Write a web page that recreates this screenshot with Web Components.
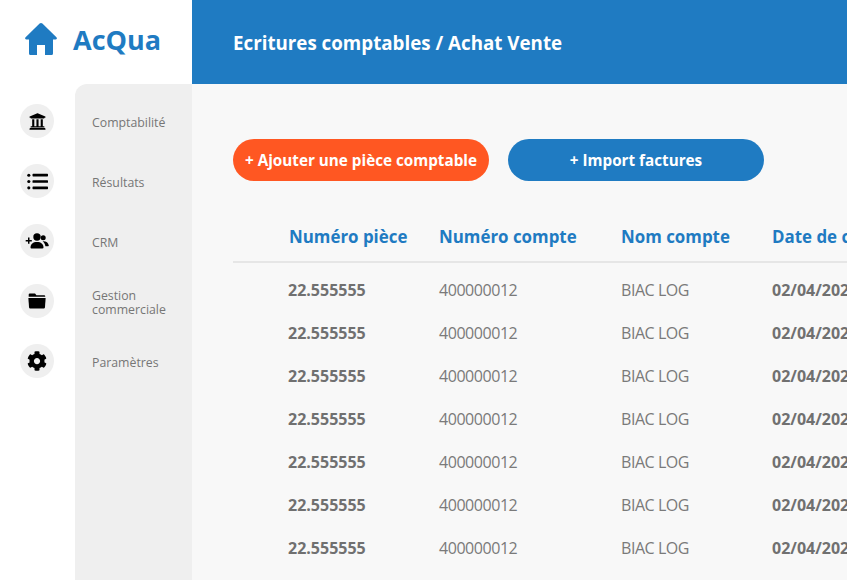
<!DOCTYPE html>
<html lang="fr">
<head>
<meta charset="utf-8">
<title>AcQua</title>
<style>
    html, body { margin: 0; height: 100%; overflow: hidden; }
    body { font-family: "Open Sans", "Liberation Sans", sans-serif; }
</style>
</head>
<body>
<app-shell>
    <app-brand slot="brand" label="AcQua"></app-brand>
    <app-header slot="header" label="Ecritures comptables / Achat Vente"></app-header>
    <side-nav slot="nav">
        <side-item icon="bank" label="Comptabilité"></side-item>
        <side-item icon="list" label="Résultats"></side-item>
        <side-item icon="users" label="CRM"></side-item>
        <side-item icon="folder" label="Gestion commerciale"></side-item>
        <side-item icon="cog" label="Paramètres"></side-item>
    </side-nav>
    <div slot="actions" style="display:flex;gap:19px">
        <pill-button color="#ff5722">+ Ajouter une pièce comptable</pill-button>
        <pill-button color="#1f7bc2">+ Import factures</pill-button>
    </div>
    <entry-table slot="table"></entry-table>
</app-shell>

<script>
(function(){
    const ICONS = {
        bank: '<svg viewBox="0 0 512 512" width="17" height="19" preserveAspectRatio="none"><path d="M496 128v16a8 8 0 0 1-8 8h-24v12c0 6.6-5.4 12-12 12H60c-6.6 0-12-5.4-12-12v-12H24a8 8 0 0 1-8-8v-16a8 8 0 0 1 4.9-7.4l232-88a8 8 0 0 1 6.2 0l232 88A8 8 0 0 1 496 128zm-24 304H40c-13.3 0-24 10.7-24 24v16a8 8 0 0 0 8 8h464a8 8 0 0 0 8-8v-16c0-13.3-10.7-24-24-24zM96 192v192H60c-6.6 0-12 5.4-12 12v20h416v-20c0-6.6-5.4-12-12-12h-36V192h-64v192h-64V192h-64v192h-64V192H96z"/></svg>',
        list: '<svg viewBox="0 0 512 512" width="21" height="21"><circle cx="44" cy="102" r="38"/><circle cx="44" cy="256" r="38"/><circle cx="44" cy="410" r="38"/><path d="M150 70h346a16 16 0 0 1 16 16v32a16 16 0 0 1-16 16H150a16 16 0 0 1-16-16V86a16 16 0 0 1 16-16zm0 154h346a16 16 0 0 1 16 16v32a16 16 0 0 1-16 16H150a16 16 0 0 1-16-16v-32a16 16 0 0 1 16-16zm0 154h346a16 16 0 0 1 16 16v32a16 16 0 0 1-16 16H150a16 16 0 0 1-16-16v-32a16 16 0 0 1 16-16z"/></svg>',
        users: '<svg viewBox="0 0 24 18" width="24" height="18"><circle cx="12" cy="5" r="3.7"/><path d="M5.5 15.5c0-3.6 2.6-5.6 6.5-5.6s6.5 2 6.5 5.6c0 .5-.4.9-.9.9H6.4c-.5 0-.9-.4-.9-.9z"/><circle cx="18.2" cy="5.8" r="2.5"/><path d="M17.6 9.2c3.2-.3 5.8 1.3 6.2 4.2.1.5-.2.8-.7.8h-2.7c-.3-2-1.2-3.8-2.8-5z"/><path d="M3 5.6h1.500v2.300h2.300v1.500H4.500v2.300H3V9.400H.7V7.900H3z"/></svg>',
        folder: '<svg viewBox="0 0 512 512" width="18" height="18"><path d="M50 40h150l40 50h220c20 0 30 10 30 30v15H20v-65c0-20 10-30 30-30z"/><path d="M10 170h492l-20 270c-2 20-15 30-30 30H60c-15 0-28-10-30-30z"/></svg>',
        cog: '<svg viewBox="0 0 512 512" width="20" height="20"><path d="M487.400 315.700l-42.600-24.600c4.300-23.200 4.300-47 0-70.200l42.600-24.600c4.900-2.800 7.100-8.600 5.500-14-11.100-35.600-30-67.800-54.700-94.600-3.800-4.100-10-5.100-14.800-2.300L380.800 110c-17.900-15.400-38.500-27.300-60.800-35.100V25.800c0-5.600-3.900-10.500-9.400-11.700-36.700-8.200-74.300-7.800-109.200 0-5.500 1.200-9.400 6.100-9.400 11.700V75c-22.200 7.900-42.800 19.800-60.800 35.100L88.700 85.500c-4.900-2.800-11-1.900-14.800 2.300-24.700 26.700-43.600 58.900-54.700 94.600-1.700 5.400.6 11.200 5.500 14L67.300 221c-4.300 23.200-4.300 47 0 70.200l-42.600 24.600c-4.900 2.800-7.100 8.600-5.500 14 11.100 35.600 30 67.800 54.700 94.600 3.800 4.100 10 5.100 14.800 2.300l42.600-24.600c17.900 15.400 38.500 27.300 60.800 35.100v49.200c0 5.600 3.900 10.500 9.400 11.700 36.700 8.200 74.300 7.800 109.200 0 5.500-1.200 9.400-6.100 9.400-11.700v-49.200c22.200-7.900 42.800-19.800 60.800-35.100l42.600 24.600c4.900 2.800 11 1.900 14.800-2.300 24.700-26.700 43.600-58.900 54.700-94.600 1.500-5.500-.7-11.300-5.600-14.100zM256 336c-44.100 0-80-35.900-80-80s35.900-80 80-80 80 35.900 80 80-35.900 80-80 80z"/></svg>'
    }

    class AppShell extends HTMLElement {
        connectedCallback() {
            this.attachShadow({mode: "open"})
            this.shadowRoot.innerHTML = `
                <style>
                    :host {
                        display: grid;
                        grid-template-columns: 192px 1fr;
                        grid-template-rows: 84px 1fr;
                        width: 847px;
                        height: 580px;
                        overflow: hidden;
                        background: #fff;
                    }
                    main {
                        background: #f8f8f8;
                        padding: 55px 0 0 41px;
                        overflow: hidden;
                    }
                    .actions { margin-bottom: 37px; }
                </style>
                <slot name="brand"></slot>
                <slot name="header"></slot>
                <slot name="nav"></slot>
                <main>
                    <div class="actions"><slot name="actions"></slot></div>
                    <slot name="table"></slot>
                </main>
            `
        }
    }

    class AppBrand extends HTMLElement {
        connectedCallback() {
            this.attachShadow({mode: "open"})
            this.shadowRoot.innerHTML = `
                <style>
                    :host {
                        display: flex;
                        align-items: center;
                        gap: 16px;
                        padding: 0 0 6px 25px;
                        color: #1f7bc2;
                        font-size: 27px;
                        font-weight: 700;
                    }
                    svg { fill: currentColor; display: block; }
                </style>
                <svg viewBox="0 0 32 32" width="32" height="32"><path d="M16 0a2 2 0 0 1 1.400.6l14 13.600A1.300 1.300 0 0 1 30.500 16.500H28v14a1.500 1.500 0 0 1-1.500 1.500H20V22h-8v10H5.500A1.500 1.500 0 0 1 4 30.500v-14H1.500A1.300 1.300 0 0 1 .6 14.200l14-13.600A2 2 0 0 1 16 0z"/></svg>
                <span>${this.getAttribute("label")}</span>
            `
        }
    }

    class AppHeader extends HTMLElement {
        connectedCallback() {
            this.attachShadow({mode: "open"})
            this.shadowRoot.innerHTML = `
                <style>
                    :host {
                        display: flex;
                        align-items: center;
                        padding-left: 41px;
                        background: #1f7bc2;
                        color: #fff;
                        font-size: 18.75px;
                        font-weight: 700;
                    }
                </style>
                <span>${this.getAttribute("label")}</span>
            `
        }
    }

    class SideNav extends HTMLElement {
        connectedCallback() {
            this.attachShadow({mode: "open"})
            this.shadowRoot.innerHTML = `
                <style>
                    :host {
                        display: block;
                        position: relative;
                        background: #fff;
                        padding-top: 7px;
                    }
                    /* panneau gris derriere les libelles */
                    .panel {
                        position: absolute;
                        top: 0;
                        right: 0;
                        bottom: 0;
                        left: 75px;
                        background: #efefef;
                        border-top-left-radius: 12px;
                    }
                    .list { position: relative; display: flex; flex-direction: column; }
                </style>
                <div class="panel"></div>
                <div class="list"><slot></slot></div>
            `
        }
    }

    class SideItem extends HTMLElement {
        connectedCallback() {
            this.attachShadow({mode: "open"})
            this.shadowRoot.innerHTML = `
                <style>
                    :host {
                        display: grid;
                        grid-template-columns: 72px 1fr;
                        align-items: center;
                        height: 60px;
                        padding-left: 20px;
                        font-size: 12.3px;
                        line-height: 14px;
                        color: #767676;
                        box-sizing: border-box;
                    }
                    .badge {
                        display: flex;
                        align-items: center;
                        justify-content: center;
                        width: 34px;
                        height: 34px;
                        border-radius: 50%;
                        background: #efefef;
                    }
                    svg { display: block; fill: #000; }
                    .label { width: 90px; padding-top: 3px; }
                </style>
                <div><div class="badge">${ICONS[this.getAttribute("icon")]}</div></div>
                <div class="label">${this.getAttribute("label")}</div>
            `
        }
    }

    class PillButton extends HTMLElement {
        connectedCallback() {
            this.attachShadow({mode: "open"})
            this.shadowRoot.innerHTML = `
                <style>
                    :host {
                        display: flex;
                        align-items: center;
                        justify-content: center;
                        width: 256px;
                        height: 42px;
                        border-radius: 21px;
                        background: ${this.getAttribute("color")};
                        color: #fff;
                        font-size: 15.25px;
                        font-weight: 700;
                        white-space: nowrap;
                    }
                </style>
                <slot></slot>
            `
        }
    }

    class EntryTable extends HTMLElement {
        connectedCallback() {
            this.attachShadow({mode: "open"})
            const row = `
                <div class="row">
                    <b>22.555555</b><span>400000012</span><span>BIAC LOG</span><b>02/04/2020</b>
                </div>`
            this.shadowRoot.innerHTML = `
                <style>
                    :host { display: block; white-space: nowrap; }
                    .head, .row {
                        display: grid;
                        grid-template-columns: 150px 182px 151px 200px;
                        padding-left: 56px;
                    }
                    .head {
                        height: 36px;
                        padding-bottom: 7px;
                        align-items: center;
                        border-bottom: 2px solid #e6e6e6;
                        color: #1f7bc2;
                        font-size: 16.9px;
                        font-weight: 700;
                    }
                    .rows { padding-top: 5px; }
                    .row {
                        height: 43px;
                        align-items: center;
                        color: #7a7a7a;
                        font-size: 16px;
                        letter-spacing: -.45px;
                    }
                    .row b { font-weight: 700; color: #707070; letter-spacing: 0; margin-left: -1px; }
                    .row b:last-child { margin-left: 0; }
                </style>
                <div class="head">
                    <span>Numéro pièce</span><span>Numéro compte</span><span>Nom compte</span><span>Date de création</span>
                </div>
                <div class="rows">${row.repeat(7)}</div>
            `
        }
    }

    customElements.define('app-shell', AppShell)
    customElements.define('app-brand', AppBrand)
    customElements.define('app-header', AppHeader)
    customElements.define('side-nav', SideNav)
    customElements.define('side-item', SideItem)
    customElements.define('pill-button', PillButton)
    customElements.define('entry-table', EntryTable)
})()
</script>
</body>
</html>
